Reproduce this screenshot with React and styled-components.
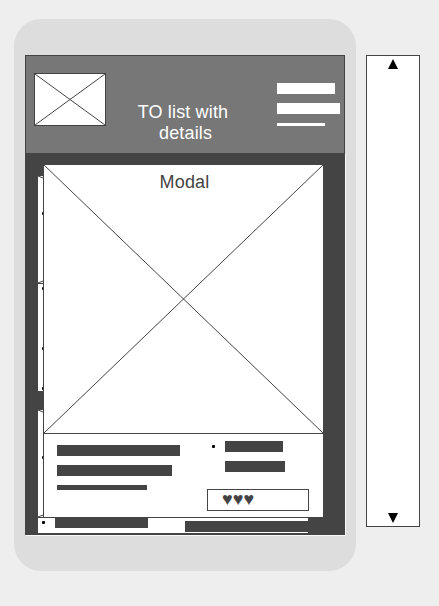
import React from "react";
import styled, { createGlobalStyle } from "styled-components";

const INK = "#444";

const GlobalStyle = createGlobalStyle`
  *, *::before, *::after { box-sizing: border-box; }
  html, body { margin: 0; background: #eee; }
  body { font-family: "Liberation Sans", Arial, sans-serif; font-size: 18px; color: ${INK}; }
`;

const Page = styled.main`
  display: flex;
  align-items: flex-start;
  gap: 10px;
  width: 439px;
  height: 606px;
  padding: 19px 19px 0 14px;
  overflow: hidden;
`;

const Device = styled.section`
  flex: none;
  width: 342px;
  height: 552px;
  padding: 36px 11px;
  background: #ddd;
  border-radius: 27px;
`;

const Screen = styled.div`
  display: flex;
  flex-direction: column;
  width: 320px;
  height: 480px;
`;

const Header = styled.header`
  display: flex;
  flex: none;
  align-items: flex-start;
  height: 98px;
  padding: 17px 0 0 8px;
  background: #777;
  border: 1px solid ${INK};
  border-bottom: 0;
`;

const Logo = styled.div`
  flex: none;
  width: 72px;
  height: 53px;
  background: #fff;
  border: 1px solid ${INK};
`;

const Title = styled.h1`
  width: 120px;
  margin: 29px 0 0 17px;
  color: #fff;
  font-size: 18px;
  font-weight: 400;
  letter-spacing: 0.15px;
  line-height: 21px;
  text-align: center;
`;

const MenuBars = styled.div`
  display: flex;
  flex-direction: column;
  gap: 9px;
  margin: 10px 0 0 34px;
`;

const Bar = styled.div`
  width: ${(p) => p.$width}px;
  height: ${(p) => p.$height || 11}px;
  background: ${(p) => (p.$light ? "#fff" : INK)};
`;

const Body = styled.div`
  position: relative;
  flex: 1;
  min-height: 0;
  padding: 23px 0 0 13px;
  background: ${INK};
  box-shadow: 1px 1px 0 #f8f8f8;
`;

const List = styled.div`
  display: flex;
  flex-direction: column;
  gap: 19px;
  width: 270px;
`;

const Card = styled.article`
  height: ${(p) => p.$height}px;
  background: #fff;
  overflow: hidden;
`;

const CardPicture = styled.div`
  position: relative;
  height: 108px;
  border-bottom: 1px solid ${INK};
`;

const CardDetails = styled.div`
  display: flex;
  align-items: flex-start;
  padding-left: 4px;
`;

const BulletRail = styled.ul`
  display: grid;
  grid-template-rows: ${(p) => p.$rows};
  width: 13px;
  margin: 0;
  padding: 0;
  list-style: none;
`;

const Bullet = styled.li`
  width: 3px;
  height: 3px;
  background: #000;
  border-radius: 1px;
  list-style: none;
`;

const PictureMarker = styled(Bullet).attrs({ as: "span" })`
  position: absolute;
  top: ${(p) => p.$top}px;
  left: 4px;
`;

const CardBar = styled(Bar)`
  margin-top: ${(p) => p.$top}px;
  margin-left: ${(p) => p.$left || 0}px;
`;

const Modal = styled.section`
  position: absolute;
  top: 12px;
  left: 18px;
  width: 280px;
  height: 353px;
  background: #fff;
  border-left: 1px solid ${INK};
  border-bottom: 1px solid ${INK};
`;

const ModalPicture = styled.div`
  display: grid;
  height: 269px;
  border-bottom: 1px solid ${INK};

  > * { grid-area: 1 / 1; }
`;

const ModalTitle = styled.h2`
  margin: 7px 0 0 2px;
  font-size: 18px;
  font-weight: 400;
  letter-spacing: 0.15px;
  line-height: 21px;
  text-align: center;
`;

const ModalDetails = styled.div`
  display: flex;
  height: 83px;
`;

const TextBars = styled.div`
  display: flex;
  flex-direction: column;
  gap: 9px;
  width: 150px;
  padding: 11px 0 0 13px;
`;

const Side = styled.div`
  display: flex;
  flex-direction: column;
  padding: 7px 0 0 13px;
`;

const Points = styled.div`
  display: flex;
  gap: 10px;
  padding-left: 5px;
`;

const PointBullet = styled(Bullet).attrs({ as: "span" })`
  margin-top: 4px;
`;

const PointBars = styled.div`
  display: grid;
  gap: 9px;
`;

const Rating = styled.div`
  width: 102px;
  height: 22px;
  margin-top: 17px;
  padding-left: 14px;
  border: 1px solid ${INK};
  font-size: 18px;
  line-height: 18px;
`;

const ScrollPanel = styled.aside`
  display: flex;
  flex: none;
  flex-direction: column;
  align-items: center;
  justify-content: space-between;
  width: 54px;
  height: 472px;
  margin-top: 36px;
  padding: 3px 0;
  background: #fff;
  border: 1px solid ${INK};
`;

const Drawing = styled.svg`
  display: block;
  width: ${(p) => p.$width || "100%"};
  height: ${(p) => p.$height || "100%"};
`;

function Cross({ width, height }) {
  return (
    <Drawing viewBox={`0 0 ${width} ${height}`} preserveAspectRatio="none" fill="none" stroke={INK}>
      <path d={`M0 0L${width} ${height}M${width} 0L0 ${height}`} />
    </Drawing>
  );
}

function Arrow({ down }) {
  return (
    <Drawing $width="10px" $height="10px" viewBox="0 0 10 10">
      <path d={down ? "M0 0H10L5 10Z" : "M0 10H10L5 0Z"} />
    </Drawing>
  );
}

export default function App() {
  return (
    <>
      <GlobalStyle />
      <Page>
        <Device>
          <Screen>
            <Header>
              <Logo><Cross width={70} height={51} /></Logo>
              <Title>TO list with<br />&nbsp;details</Title>
              <MenuBars>
                <Bar $light $width={58} />
                <Bar $light $width={63} />
                <Bar $light $width={48} $height={3} />
              </MenuBars>
            </Header>
            <Body>
              <List>
                <Card $height={215}>
                  <CardPicture>
                    <Cross width={270} height={107} />
                    <PictureMarker $top={36} />
                  </CardPicture>
                  <CardDetails>
                    <BulletRail $rows="3px 60px 40px 3px">
                      <span />
                      <Bullet />
                      <Bullet />
                      <Bullet />
                    </BulletRail>
                  </CardDetails>
                </Card>
                <Card $height={123}>
                  <CardPicture>
                    <Cross width={270} height={107} />
                    <PictureMarker $top={46} />
                  </CardPicture>
                  <CardDetails>
                    <BulletRail $rows="3px 3px">
                      <span />
                      <Bullet />
                    </BulletRail>
                    <CardBar $width={93} $height={10} $top={0} />
                    <CardBar $width={123} $top={3} $left={37} />
                  </CardDetails>
                </Card>
              </List>
              <Modal>
                <ModalPicture>
                  <Cross width={279} height={268} />
                  <ModalTitle>Modal</ModalTitle>
                </ModalPicture>
                <ModalDetails>
                  <TextBars>
                    <Bar $width={123} />
                    <Bar $width={115} />
                    <Bar $width={90} $height={5} />
                  </TextBars>
                  <Side>
                    <Points>
                      <PointBullet />
                      <PointBars>
                        <Bar $width={58} />
                        <Bar $width={60} />
                      </PointBars>
                    </Points>
                    <Rating>♥♥♥</Rating>
                  </Side>
                </ModalDetails>
              </Modal>
            </Body>
          </Screen>
        </Device>
        <ScrollPanel>
          <Arrow />
          <Arrow down />
        </ScrollPanel>
      </Page>
    </>
  );
}
